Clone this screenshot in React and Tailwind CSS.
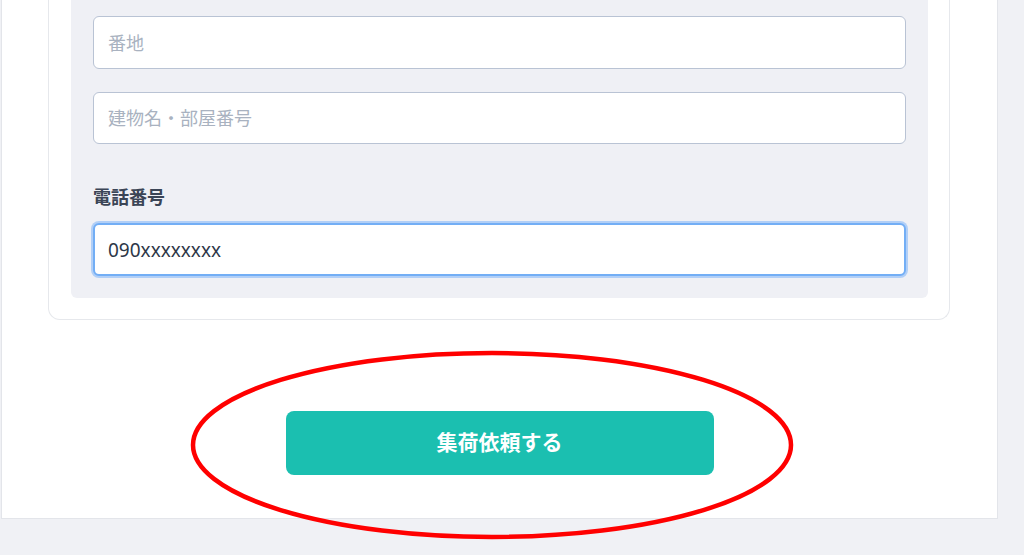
import { useState } from "react";

function App() {
  const [phone, setPhone] = useState("090xxxxxxxx");

  return (
    <div className="relative min-h-[555px] w-full overflow-hidden bg-[#f0f1f5] font-['Noto_Sans','Noto_Sans_CJK_JP',sans-serif]">
      {/* Page panel */}
      <div className="ml-[1px] h-[519px] w-[997px] border-x border-b border-[#e3e5ea] bg-white flex flex-col">
        {/* Address card */}
        <div className="ml-[46px] w-[902px] rounded-b-xl border border-t-0 border-[#e6e8ec] pl-[22px] pr-[21px] pb-[21px]">
          <div className="flex flex-col rounded-b-md bg-[#eff0f5] px-[22px] pt-[16px] pb-[22px]">
            <input
              placeholder="番地"
              className="h-[53px] w-full rounded-md border border-[#b9c3d4] bg-white px-[14px] text-[18px] text-[#2d3748] placeholder:text-[#a9b2c0] outline-none"
            />
            <input
              placeholder="建物名・部屋番号"
              className="mt-[23px] h-[52px] w-full rounded-md border border-[#b9c3d4] bg-white px-[14px] text-[18px] text-[#2d3748] placeholder:text-[#a9b2c0] outline-none"
            />
            <label className="mt-[42px] mb-[15px] text-[18px] leading-[22px] font-bold text-[#3b4556]">
              電話番号
            </label>
            <input
              autoFocus
              value={phone}
              onChange={(e) => setPhone(e.target.value)}
              className="h-[53px] w-full rounded-md border-2 border-[#73aef5] bg-white px-[13px] text-[19px] text-[#2d3748] caret-[#2d3748] shadow-[0_0_0_2px_rgba(125,180,248,0.55)] outline-none"
            />
          </div>
        </div>

        {/* Submit */}
        <button className="mx-auto mt-[91px] h-[64px] w-[428px] rounded-lg bg-[#1bbfb0] text-[21px] font-bold text-white">
          集荷依頼する
        </button>
      </div>

      {/* Red annotation ellipse */}
      <svg className="pointer-events-none absolute left-0 top-0" width="1024" height="555">
        <ellipse cx="492" cy="445" rx="299" ry="92" fill="none" stroke="#ff0000" strokeWidth="4.5" />
      </svg>
    </div>
  );
}

export default App;
